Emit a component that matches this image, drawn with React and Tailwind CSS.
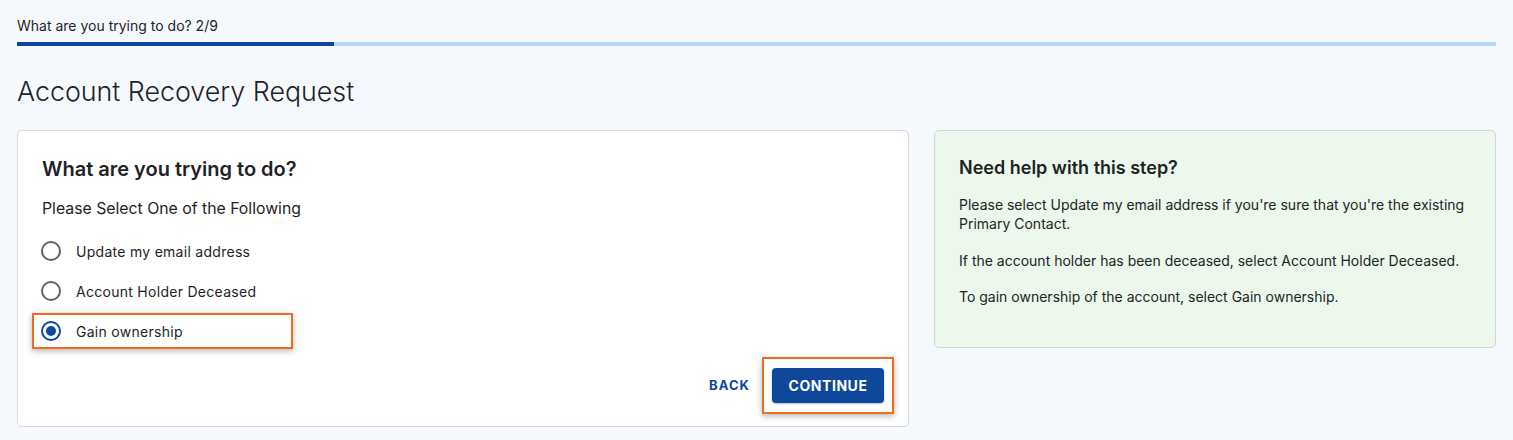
function Radio({ label, checked, highlight }) {
    return (
        <label
            className={
                "-ml-[10px] flex h-[36px] w-[261px] cursor-pointer items-center gap-[15px] border-2 pl-[7px] " +
                (highlight ? "border-[#f26b1d] shadow-[0_2px_6px_rgba(0,0,0,0.3)]" : "border-transparent")
            }
        >
            <span
                className={
                    "flex h-[20px] w-[20px] items-center justify-center rounded-full border-2 " +
                    (checked ? "border-[#0d47a1]" : "border-[#5f6368]")
                }
            >
                {checked && <span className="h-[10px] w-[10px] rounded-full bg-[#0d47a1]" />}
            </span>
            <span className="text-[14px] tracking-[0.02em] text-[#1f2328]">{label}</span>
        </label>
    );
}

function App() {
    return (
        <div className="min-h-screen bg-[#f5f9fd] px-[17px] pt-[17px] font-['Inter',sans-serif] text-[#1f2328]">
            <div className="text-[14px] leading-[18px]">What are you trying to do? 2/9</div>
            <div className="mt-[7px] flex h-[4px] bg-[#bbd5f5]">
                <div className="w-[317px] bg-[#0d47a1]" />
            </div>

            <h1 className="mt-[29px] text-[26.8px] font-light leading-[32px] text-[#1f2328]">Account Recovery Request</h1>

            <div className="mt-[23px] flex items-start gap-[25px]">
                <div className="flex w-[892px] flex-col rounded-[5px] border border-[#d6dade] bg-white px-[24px] pt-[26px] pb-[12px]">
                    <h2 className="text-[20px] font-semibold leading-[24px]">What are you trying to do?</h2>
                    <p className="mt-[18px] text-[15.8px] leading-[20px]">Please Select One of the Following</p>
                    <div className="mt-[14px] flex flex-col gap-[4px]">
                        <Radio label="Update my email address" />
                        <Radio label="Account Holder Deceased" />
                        <Radio label="Gain ownership" checked highlight />
                    </div>
                    <div className="mt-[8px] -mr-[10px] flex items-center justify-end gap-[12px]">
                        <button className="text-[13px] font-bold tracking-[0.08em] text-[#0d47a1]">BACK</button>
                        <div className="border-2 border-[#f26b1d] px-[8px] py-[9px] shadow-[0_2px_6px_rgba(0,0,0,0.3)]">
                            <button className="h-[35px] w-[112px] rounded-[4px] bg-[#0f479b] text-[14px] font-bold tracking-[0.04em] text-white shadow-[0_1px_2px_rgba(0,0,0,0.3)]">
                                CONTINUE
                            </button>
                        </div>
                    </div>
                </div>

                <div className="flex-1 rounded-[5px] border border-[#cfd6cf] bg-[#ebf8eb] px-[24px] pt-[25px] pb-[41px]">
                    <h3 className="text-[18px] font-semibold leading-[24px]">Need help with this step?</h3>
                    <p className="mt-[15px] text-[14px] leading-[19px]">
                        Please select Update my email address if you're sure that you're the existing Primary Contact.
                    </p>
                    <p className="mt-[18px] text-[14px] leading-[19px]">
                        If the account holder has been deceased, select Account Holder Deceased.
                    </p>
                    <p className="mt-[17px] text-[14px] leading-[19px]">To gain ownership of the account, select Gain ownership.</p>
                </div>
            </div>
        </div>
    );
}

export default App
